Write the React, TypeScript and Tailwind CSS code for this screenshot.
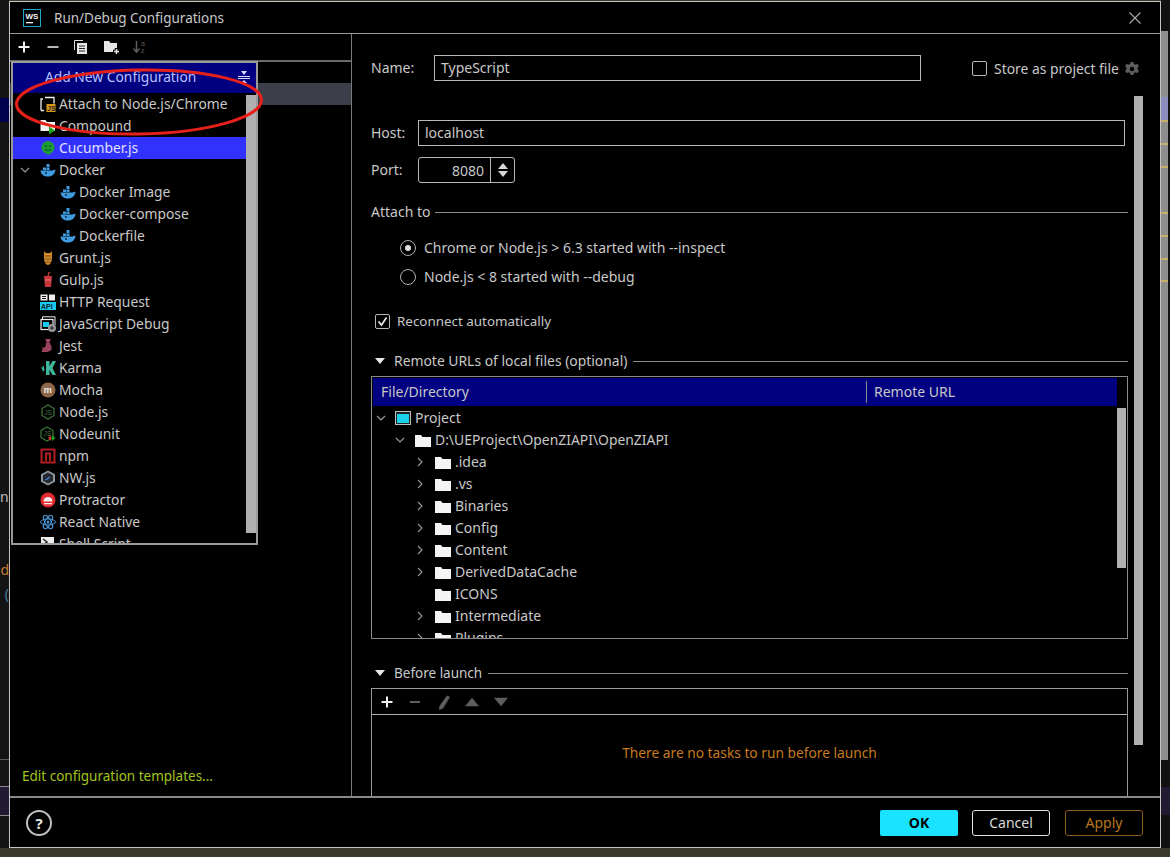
import React from "react";

const Ic = ({ children, w = 16 }: { children: React.ReactNode; w?: number }) => (
  <svg width={w} height={16} viewBox="0 0 16 16" className="shrink-0" aria-hidden="true">{children}</svg>
);

const Docker = () => (
  <Ic>
    <path d="M0.5 8.5h12.2c.8 0 1.6-.8 2.8-.6-.4 3.6-3.2 6.6-7.5 6.6C4 14.500 1 12.500.5 8.500z" fill="#3f9be0" />
    <rect x="3" y="5.500" width="3" height="2.500" fill="#3f9be0" />
    <rect x="6.500" y="5.500" width="3" height="2.500" fill="#3f9be0" />
    <rect x="6.500" y="2" width="3" height="3" fill="#3f9be0" />
    <circle cx="6" cy="11" r="1" fill="#0a2a44" />
  </Ic>
);

const icons: Record<string, React.ReactNode> = {
  attach: (
    <Ic>
      <path d="M1 14.500V3h2M1 14.500h3M5 1.500h9v6" stroke="#eee" strokeWidth="1.300" fill="none" />
      <rect x="6.500" y="8" width="9" height="8" fill="#d99a1c" />
      <text x="7.300" y="14.600" fontSize="6.500" fontWeight="700" fill="#222" fontFamily="Liberation Sans, sans-serif">JS</text>
    </Ic>
  ),
  compound: (
    <Ic>
      <path d="M0.500 2h5l1.500 2h8v9H.5z" fill="#f2f2f2" />
      <path d="M9 8.500l6 4-6 4z" fill="#1da51f" />
    </Ic>
  ),
  cucumber: (
    <Ic>
      <circle cx="8" cy="7.500" r="6.500" fill="#1d9b36" />
      <path d="M8 13l-1 3 4-3z" fill="#1d9b36" />
      <circle cx="5.800" cy="6" r="1" fill="#0d4f1c" />
      <circle cx="10.200" cy="6" r="1" fill="#0d4f1c" />
      <path d="M5 9.500c1.500 1.300 4.500 1.300 6 0" stroke="#0d4f1c" fill="none" />
    </Ic>
  ),
  docker: <Docker />,
  grunt: (
    <Ic>
      <path d="M4 1l2 2h4l2-2v6c0 4-1.500 8-4 8s-4-4-4-8z" fill="#d28a2c" />
      <path d="M5 6h6M5 9h6M6 12h4" stroke="#7a4b12" strokeWidth="1.200" />
    </Ic>
  ),
  gulp: (
    <Ic>
      <path d="M4 4h8l-1 11H5z" fill="#c9383a" />
      <path d="M8 4l1-4h2" stroke="#c9383a" strokeWidth="1.200" fill="none" />
      <path d="M5 8h6" stroke="#f08080" />
    </Ic>
  ),
  http: (
    <Ic>
      <rect x="0.500" y="0.500" width="7" height="6" fill="#eee" />
      <path d="M2 2.500h4M2 4.500h4" stroke="#111" />
      <rect x="9" y="0.500" width="6" height="6" fill="#eee" />
      <rect x="0" y="8" width="16" height="8" fill="#18c9ef" />
      <text x="1" y="15" fontSize="7" fontWeight="700" fill="#06222b" fontFamily="Liberation Sans, sans-serif">API</text>
    </Ic>
  ),
  jsdebug: (
    <Ic>
      <path d="M2.500 3V.8h12.500V9" stroke="#eee" fill="none" />
      <rect x="1" y="3.500" width="12" height="10" stroke="#eee" strokeWidth="1.200" fill="none" />
      <rect x="3" y="6" width="6" height="5" fill="#18c9ef" />
      <circle cx="12" cy="12" r="4" fill="#9a9a9a" />
      <path d="M10 12h4M12 10v4" stroke="#222" />
    </Ic>
  ),
  jest: (
    <Ic>
      <path d="M5 1h6l-1.500 3 1 3H5.500l1-3z" fill="#99425b" />
      <path d="M6 7h5c1 3 1 5-1 6-3 1.500-6 1-8.500 1 1-2 1-3.500 1-5 1.500 1 2.500 1 3.500-2z" fill="#99425b" />
    </Ic>
  ),
  karma: (
    <Ic>
      <path d="M6 1h3.500v5L12.500 1H16l-3.500 7 3.500 7h-3.500l-3-5v5H6z" fill="#3fb59b" />
      <path d="M0 6l2 2 1.500-3 1 5-1.500 2-1-3z" fill="#3fb59b" />
    </Ic>
  ),
  mocha: (
    <Ic>
      <circle cx="8" cy="8" r="7.500" fill="#8d6748" />
      <text x="3.800" y="11" fontSize="9" fontWeight="700" fill="#eee" fontFamily="Liberation Sans, sans-serif">m</text>
    </Ic>
  ),
  node: (
    <Ic>
      <path d="M8 1l6 3.500v7L8 15l-6-3.500v-7z" stroke="#3d7a3a" strokeWidth="1.200" fill="none" />
      <text x="4.600" y="10.500" fontSize="6.500" fill="#3d7a3a" fontFamily="Liberation Sans, sans-serif">JS</text>
    </Ic>
  ),
  nodeunit: (
    <Ic>
      <path d="M7 1l6 3.500v7L7 15l-6-3.500v-7z" stroke="#3d7a3a" strokeWidth="1.200" fill="none" />
      <text x="3.800" y="10" fontSize="6.500" fill="#3d7a3a" fontFamily="Liberation Sans, sans-serif">JS</text>
      <path d="M11 9v6l-3-3z" fill="#d42a2a" />
      <path d="M12 9v6l3.500-3z" fill="#16a31c" />
    </Ic>
  ),
  npm: (
    <Ic>
      <rect x="1.500" y="1.500" width="13" height="13" stroke="#b21f24" strokeWidth="2" fill="none" />
      <path d="M5 13V4.500h6V13H9V6.500H7V13z" fill="#b21f24" />
    </Ic>
  ),
  nw: (
    <Ic>
      <path d="M8 .5l7 3.800v7.400l-7 3.800-7-3.800V4.300z" fill="#8d96a0" />
      <path d="M8 2.500l5 2.800v5.400l-5 2.800-5-2.800V5.300z" fill="#23272c" />
      <path d="M5.500 10l4.500-3" stroke="#3f86d8" strokeWidth="1.500" />
    </Ic>
  ),
  protractor: (
    <Ic>
      <circle cx="8" cy="8" r="7.500" fill="#e02a2f" />
      <path d="M3.500 9.500a4.500 4.500 0 0 1 9 0z" fill="#f7f0f0" />
      <rect x="4" y="11" width="8" height="1.300" fill="#f7f0f0" />
    </Ic>
  ),
  react: (
    <Ic>
      <circle cx="8" cy="8" r="1.500" fill="#4e95d8" />
      <g stroke="#4e95d8" fill="none">
        <ellipse cx="8" cy="8" rx="7.500" ry="3" />
        <ellipse cx="8" cy="8" rx="7.500" ry="3" transform="rotate(60 8 8)" />
        <ellipse cx="8" cy="8" rx="7.500" ry="3" transform="rotate(120 8 8)" />
      </g>
    </Ic>
  ),
  shell: (
    <Ic>
      <rect x="1" y="1" width="13" height="13" fill="#eee" />
      <path d="M3 3l4 3-4 3" stroke="#222" strokeWidth="1.500" fill="none" />
    </Ic>
  ),
};

const configs: { id: string; label: string; indent?: boolean; selected?: boolean; open?: boolean }[] = [
  { id: "attach", label: "Attach to Node.js/Chrome" },
  { id: "compound", label: "Compound" },
  { id: "cucumber", label: "Cucumber.js", selected: true },
  { id: "docker", label: "Docker", open: true },
  { id: "docker", label: "Docker Image", indent: true },
  { id: "docker", label: "Docker-compose", indent: true },
  { id: "docker", label: "Dockerfile", indent: true },
  { id: "grunt", label: "Grunt.js" },
  { id: "gulp", label: "Gulp.js" },
  { id: "http", label: "HTTP Request" },
  { id: "jsdebug", label: "JavaScript Debug" },
  { id: "jest", label: "Jest" },
  { id: "karma", label: "Karma" },
  { id: "mocha", label: "Mocha" },
  { id: "node", label: "Node.js" },
  { id: "nodeunit", label: "Nodeunit" },
  { id: "npm", label: "npm" },
  { id: "nw", label: "NW.js" },
  { id: "protractor", label: "Protractor" },
  { id: "react", label: "React Native" },
  { id: "shell", label: "Shell Script" },
];

const Chevron = ({ open }: { open?: boolean }) => (
  <svg width="10" height="10" viewBox="0 0 10 10" className="shrink-0" aria-hidden="true">
    <path d={open ? "M1 3l4 4 4-4" : "M3 1l4 4-4 4"} stroke="#9a9a9a" strokeWidth="1.100" fill="none" />
  </svg>
);

const Folder = ({ w = 16 }: { w?: number }) => (
  <svg width={w} height="13" viewBox="0 0 16 13" className="shrink-0" aria-hidden="true">
    <path d="M0 1h6l1.500 2H16v10H0z" fill="#f4f4f4" />
  </svg>
);

const Tri = ({ down = true, color = "#e8e8e8", size = 10 }: { down?: boolean; color?: string; size?: number }) => (
  <svg width={size} height={size} viewBox="0 0 10 10" className="shrink-0" aria-hidden="true">
    <path d={down ? "M0 2h10L5 8z" : "M0 8h10L5 2z"} fill={color} />
  </svg>
);

const tree = [".idea", ".vs", "Binaries", "Config", "Content", "DerivedDataCache", "ICONS", "Intermediate", "Plugins"];

export default function App() {
  return (
    <div className="relative h-[857px] w-[1173px] overflow-hidden bg-[#3b3a2d] pl-[9px] pt-[1px] font-['Noto_Sans','Liberation_Sans',sans-serif] text-[14px] leading-[22px] text-[#c8c8c8]">
      {/* IDE behind the dialog */}
      <div className="absolute left-0 top-0 h-[848px] w-[9px] bg-[#141414]">
        <div className="absolute left-0 top-[98px] h-[24px] w-full bg-[#000050]" />
        <span className="absolute left-0 top-[486px] text-[#bbbbbb]">n</span>
        <span className="absolute right-0 top-[559px] text-[#c87a2a]">d</span>
        <span className="absolute right-0 top-[583px] text-[#4a7fa8]">(</span>
        <div className="absolute left-0 top-[759px] h-px w-full bg-[#5a5a5a]" />
        <div className="absolute left-0 top-[786px] h-[30px] w-full border-y border-[#8a8a8a] bg-[#221a33]" />
      </div>
      <div className="absolute left-[1161px] top-0 h-[848px] w-[9px] bg-[#111111]">
        <div className="absolute left-0 top-[31px] h-[729px] w-[7px] bg-[#8f8f8f]">
          <div className="absolute left-0 top-[66px] h-[23px] w-full bg-[#8d8dc0]" />
          {[120, 143, 166, 212, 235, 258, 280].map((t) => (
            <div key={t} className="h-[2px] w-full bg-[#c9b06a]" style={{ position: "absolute", top: t - 31 }} />
          ))}
        </div>
        <div className="absolute left-0 top-[787px] h-[28px] w-full bg-[#221a33]" />
      </div>
      <div className="absolute right-0 top-0 h-full w-[3px] bg-white" />

      {/* Dialog */}
      <div className="relative flex h-[847px] w-[1152px] flex-col border border-[#c4c4c4] bg-black">
        <div className="flex h-[32px] shrink-0 items-center border-b border-[#9a9a9a] pl-[13px] pr-[19px]">
          <svg width="18" height="18" viewBox="0 0 18 18" className="shrink-0" aria-hidden="true">
            <rect x="0.500" y="0.500" width="17" height="17" fill="#000" stroke="#1fa6c8" />
            <text x="2.500" y="9.500" fontSize="8" fontWeight="700" fill="#f2f2f2" fontFamily="Liberation Sans, sans-serif">WS</text>
            <rect x="3" y="13" width="7" height="1.300" fill="#f2f2f2" />
          </svg>
          <span className="ml-[13px] text-[13.5px] text-[#c8c8c8]">Run/Debug Configurations</span>
          <svg width="12" height="12" viewBox="0 0 12 12" className="ml-auto shrink-0" aria-hidden="true">
            <path d="M.5.5l11 11M11.500.5l-11 11" stroke="#a8a8a8" strokeWidth="1.100" />
          </svg>
        </div>

        <div className="flex min-h-0 flex-1">
          {/* Left pane */}
          <div className="flex w-[342px] shrink-0 flex-col border-r border-[#7a7a7a]">
            <div className="flex h-[28px] shrink-0 items-center gap-[13px] border-b-2 border-[#6a6a6a] pl-[7px]">
              <svg width="14" height="14" viewBox="0 0 14 14" aria-hidden="true"><path d="M7 1.500v11M1.500 7h11" stroke="#f2f2f2" strokeWidth="2" /></svg>
              <svg width="14" height="14" viewBox="0 0 14 14" className="ml-[2px]" aria-hidden="true"><path d="M1.500 7h11" stroke="#b8b8b8" strokeWidth="2" /></svg>
              <svg width="16" height="16" viewBox="0 0 16 16" aria-hidden="true">
                <path d="M1.500 11V1.500H10" stroke="#ddd" fill="none" />
                <rect x="4" y="4" width="10" height="11" fill="#e6e6e6" />
                <path d="M6 7h6M6 9.500h6M6 12h6" stroke="#222" />
              </svg>
              <svg width="18" height="16" viewBox="0 0 18 16" aria-hidden="true" className="ml-[1px]">
                <path d="M1 2h5l1.500 2H14v9H1z" fill="#e6e6e6" />
                <path d="M13.500 9v7M10 12.500h7" stroke="#000" strokeWidth="3.500" />
                <path d="M13.500 10v5M11 12.500h5" stroke="#e6e6e6" strokeWidth="1.500" />
              </svg>
              <svg width="16" height="16" viewBox="0 0 16 16" aria-hidden="true" className="-ml-[2px]">
                <path d="M4.500 2v10M1.500 9.500l3 3.500 3-3.500" stroke="#5e5e5e" strokeWidth="1.500" fill="none" />
                <text x="9" y="7" fontSize="7" fill="#5e5e5e" fontFamily="Liberation Sans, sans-serif">a</text>
                <text x="9" y="14" fontSize="7" fill="#5e5e5e" fontFamily="Liberation Sans, sans-serif">z</text>
              </svg>
            </div>
            <div className="mt-[21px] h-[22px] shrink-0 bg-[#3c3f4a]" />
            <div className="mt-auto pb-[9px] pl-[12px] text-[13.5px] text-[#a3c41c]">Edit configuration templates...</div>
          </div>

          {/* Right pane */}
          <div className="relative min-w-0 flex-1 overflow-hidden">
            <div className="mt-[21px] flex h-[26px] items-center pl-[19px]">
              <span className="w-[63px]">Name:</span>
              <div className="flex h-[26px] w-[487px] items-center border border-[#b8b8b8] pl-[6px]">TypeScript</div>
              <span className="ml-[51px] mt-[1px] h-[15px] w-[15px] rounded-[2px] border border-[#b8b8b8]" />
              <span className="ml-[7px] mt-[2px] whitespace-nowrap text-[13.9px]">Store as project file</span>
              <svg width="16" height="16" viewBox="0 0 16 16" className="ml-[5px] mt-[1px] shrink-0" aria-hidden="true">
                <path d="M6.500 1h3l.4 2 1.700.8 1.800-1 1.500 2.600-1.500 1.300v1.600l1.500 1.300-1.500 2.600-1.800-1-1.700.8-.4 2h-3l-.4-2-1.700-.8-1.800 1L1.100 9.600l1.500-1.300V6.700L1.100 5.400l1.500-2.600 1.800 1 1.700-.8z" fill="#5e5e5e" />
                <circle cx="8" cy="8" r="2.300" fill="#000" />
              </svg>
            </div>

            <div className="mt-[39px] flex h-[26px] items-center pl-[19px]">
              <span className="w-[47px]">Host:</span>
              <div className="flex h-[26px] w-[707px] items-center border border-[#b8b8b8] pl-[6px]">localhost</div>
            </div>

            <div className="mt-[11px] flex h-[26px] items-center pl-[19px]">
              <span className="w-[47px]">Port:</span>
              <div className="flex h-[26px] w-[97px] rounded-[3px] border border-[#b8b8b8]">
                <span className="flex w-[71px] items-center justify-end pr-[6px] pt-[1px]">8080</span>
                <span className="flex flex-1 flex-col items-center justify-center gap-[2px] border-l border-[#b8b8b8]">
                  <svg width="10" height="6" viewBox="0 0 10 6" aria-hidden="true"><path d="M5 0l5 6H0z" fill="#d8d8d8" /></svg>
                  <svg width="10" height="6" viewBox="0 0 10 6" aria-hidden="true"><path d="M0 0h10L5 6z" fill="#d8d8d8" /></svg>
                </span>
              </div>
            </div>

            <div className="mt-[18px] flex h-[22px] items-center pl-[19px] pr-[32px]">
              <span>Attach to</span>
              <span className="ml-[5px] h-px flex-1 bg-[#8a8a8a]" />
            </div>

            <div className="mt-[14px] flex h-[22px] items-center pl-[48px]">
              <span className="flex h-[16px] w-[16px] items-center justify-center rounded-full border border-[#b0b0b0]">
                <span className="h-[6px] w-[6px] rounded-full bg-[#e0e0e0]" />
              </span>
              <span className="ml-[8px]">Chrome or Node.js &gt; 6.3 started with --inspect</span>
            </div>
            <div className="mt-[7px] flex h-[22px] items-center pl-[48px]">
              <span className="h-[16px] w-[16px] rounded-full border border-[#b0b0b0]" />
              <span className="ml-[8px]">Node.js &lt; 8 started with --debug</span>
            </div>

            <div className="mt-[22px] flex h-[22px] items-center pl-[23px]">
              <span className="flex h-[15px] w-[15px] items-center justify-center rounded-[2px] border border-[#b8b8b8]">
                <svg width="11" height="11" viewBox="0 0 11 11" aria-hidden="true"><path d="M1.500 5.500l3 3.500L9.500 1.500" stroke="#e8e8e8" strokeWidth="1.700" fill="none" /></svg>
              </span>
              <span className="ml-[7px] text-[13.4px]">Reconnect automatically</span>
            </div>

            <div className="mt-[18px] flex h-[22px] items-center pl-[23px] pr-[32px]">
              <Tri />
              <span className="ml-[9px] text-[13.9px]">Remote URLs of local files (optional)</span>
              <span className="ml-[6px] h-px flex-1 bg-[#8a8a8a]" />
            </div>

            <div className="ml-[19px] mr-[32px] mt-[4px] h-[263px] overflow-hidden border border-[#8a8a8a]">
              <div className="ml-px mt-px flex h-[28px] w-[744px] items-center bg-[#000080] text-[#c8c8c8]">
                <span className="w-[494px] border-r border-[#8a8a8a] pl-[8px]">File/Directory</span>
                <span className="pl-[7px]">Remote URL</span>
              </div>
              <div className="relative pt-px">
                <div className="absolute right-[1px] top-[2px] h-[160px] w-[9px] bg-[#b0b0b0]" />
                <div className="flex h-[22px] items-center pl-[4px]">
                  <Chevron open />
                  <svg width="16" height="14" viewBox="0 0 16 14" className="ml-[9px] shrink-0" aria-hidden="true">
                    <rect x="0.500" y="0.500" width="15" height="13" fill="#222" stroke="#bdbdbd" />
                    <rect x="2" y="3" width="12" height="9" fill="#18d2ea" />
                  </svg>
                  <span className="ml-[4px]">Project</span>
                </div>
                <div className="flex h-[22px] items-center pl-[23px]">
                  <Chevron open />
                  <span className="ml-[10px]"><Folder /></span>
                  <span className="ml-[4px] text-[13.9px]">D:\UEProject\OpenZIAPI\OpenZIAPI</span>
                </div>
                {tree.map((name) => (
                  <div key={name} className="flex h-[22px] items-center pl-[43px]">
                    {name === "ICONS" ? <span className="w-[10px]" /> : <Chevron />}
                    <span className="ml-[10px]"><Folder /></span>
                    <span className="ml-[4px]">{name}</span>
                  </div>
                ))}
              </div>
            </div>

            <div className="mt-[23px] flex h-[22px] items-center pl-[23px] pr-[32px]">
              <Tri />
              <span className="ml-[9px] text-[13.5px]">Before launch</span>
              <span className="ml-[6px] h-px flex-1 bg-[#8a8a8a]" />
            </div>

            <div className="ml-[19px] mr-[32px] mt-[4px] h-[140px] border border-[#9a9a9a]">
              <div className="flex h-[26px] items-center gap-[13px] border-b border-[#b0b0b0] pl-[8px]">
                <svg width="14" height="14" viewBox="0 0 14 14" aria-hidden="true"><path d="M7 1.500v11M1.500 7h11" stroke="#f2f2f2" strokeWidth="2" /></svg>
                <svg width="14" height="14" viewBox="0 0 14 14" className="ml-[1px]" aria-hidden="true"><path d="M2 7h10" stroke="#5e5e5e" strokeWidth="2" /></svg>
                <svg width="16" height="16" viewBox="0 0 16 16" className="ml-[1px]" aria-hidden="true"><path d="M11 1.500l3 1.500-7 11.500-4 1.500.5-4z" fill="#5e5e5e" /></svg>
                <Tri down={false} color="#5e5e5e" size={14} />
                <span className="ml-[2px] flex"><Tri color="#5e5e5e" size={14} /></span>
              </div>
              <div className="mt-[27px] text-center text-[13.75px] text-[#c87a1e]">There are no tasks to run before launch</div>
            </div>

            <div className="absolute left-[782px] top-[62px] h-[649px] w-[9px] bg-[#b0b0b0]" />
          </div>
        </div>

        {/* Footer */}
        <div className="flex h-[51px] shrink-0 items-center border-t-2 border-[#8a8a8a] pl-[16px] pr-[17px]">
          <span className="flex h-[26px] w-[26px] items-center justify-center rounded-full border-2 border-[#c0c0c0] text-[15px] font-bold text-[#e8e8e8]">?</span>
          <button className="ml-auto h-[26px] w-[78px] rounded-[2px] bg-[#19e3ff] text-[14px] font-bold text-black">OK</button>
          <button className="ml-[14px] h-[26px] w-[78px] rounded-[3px] border border-[#e0e0e0] text-[#d8d8d8]">Cancel</button>
          <button className="ml-[15px] h-[26px] w-[78px] rounded-[3px] border border-[#8a5a1e] text-[#b8761e]">Apply</button>
        </div>

        {/* Add New Configuration popup */}
        <div className="absolute left-[1px] top-[59px] flex h-[484px] w-[247px] flex-col overflow-hidden border-2 border-[#9a9a9a] bg-black">
          <div className="flex h-[30px] shrink-0 items-center bg-[#000080] pb-[3px] pl-[32px] pr-[5px] text-[#b8c0ff]">
            <span className="text-[13.8px]">Add New Configuration</span>
            <svg width="14" height="14" viewBox="0 0 14 14" className="ml-auto" aria-hidden="true">
              <path d="M1 6.500h12M1 8.500h12" stroke="#d8d8ff" />
              <path d="M4 1h6L7 5zM4 13h6L7 10z" fill="#d8d8ff" />
            </svg>
          </div>
          <div className="relative min-h-0 flex-1 overflow-hidden">
            <div className="absolute right-0 top-[2px] h-[438px] w-[10px] bg-[#b0b0b0]" />
            {configs.map((c) => (
              <div key={c.label} className={`flex h-[22px] w-[233px] items-center ${c.selected ? "bg-[#3232ff] text-[#e0e0ff]" : ""} ${c.indent ? "pl-[47px]" : c.open ? "pl-[7px]" : "pl-[27px]"}`}>
                {c.open && <span className="mr-[10px]"><Chevron open /></span>}
                {icons[c.id]}
                <span className="ml-[3px] whitespace-nowrap text-[13.85px]">{c.label}</span>
              </div>
            ))}
          </div>
        </div>

        {/* Red annotation */}
        <svg width="262" height="72" viewBox="0 0 262 72" className="pointer-events-none absolute left-[1px] top-[64px]" aria-hidden="true">
          <ellipse cx="128" cy="36" rx="122.500" ry="32" fill="none" stroke="#e8201a" strokeWidth="3" transform="rotate(-1 128 36)" />
        </svg>
      </div>
    </div>
  );
}
